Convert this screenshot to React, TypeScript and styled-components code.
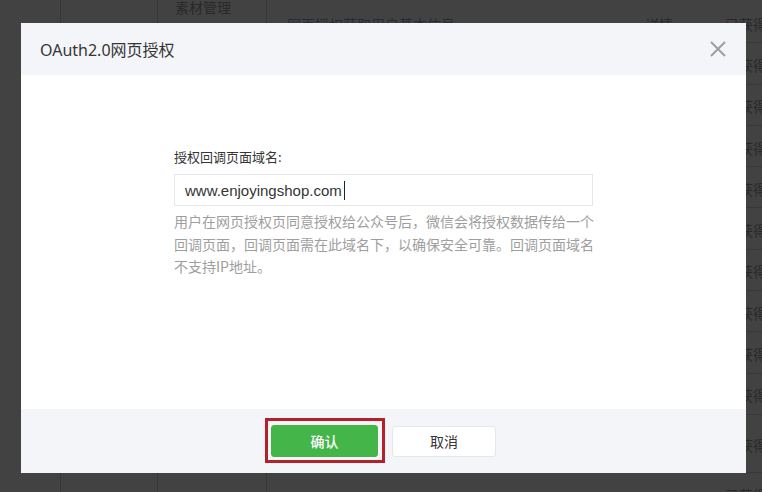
import React from "react";
import styled, { createGlobalStyle } from "styled-components";

const Global = createGlobalStyle`
  html, body { margin: 0; padding: 0; }
  body {
    width: 762px;
    height: 492px;
    overflow: hidden;
    background: #ffffff;
    font-family: "Noto Sans", "Noto Sans CJK SC", sans-serif;
  }
`;

const Page = styled.div`
  position: relative;
  display: flex;
  width: 762px;
  height: 492px;
  background: #ffffff;
  overflow: hidden;
`;

const Rail = styled.div<{ $w: number }>`
  flex: 0 0 ${(p) => p.$w}px;
  border-right: 1px solid #d6d6d6;
  box-sizing: border-box;
`;

const Menu = styled.div`
  flex: 0 0 109px;
  border-right: 1px solid #d6d6d6;
  box-sizing: border-box;
  padding: 0 0 0 17px;
`;

const MenuItem = styled.div`
  margin-top: -2px;
  font-family: "Noto Sans CJK SC", sans-serif;
  font-size: 14px;
  line-height: 18px;
  color: #9c9c9c;
`;

const Main = styled.div`
  flex: 1;
  display: flex;
  flex-direction: column;
  padding-top: 2px;
`;

const Row = styled.div<{ $h: number }>`
  display: flex;
  align-items: center;
  flex: 0 0 ${(p) => p.$h}px;
  border-bottom: 1px solid #d8d8d8;
  box-sizing: border-box;
  padding-top: 3px;
  font-family: "Noto Sans CJK SC", sans-serif;
  font-size: 14px;
  color: #9c9c9c;
`;

const Cell = styled.div<{ $w: number; $c?: string }>`
  flex: 0 0 ${(p) => p.$w}px;
  color: ${(p) => p.$c || "#9c9c9c"};
  white-space: nowrap;
`;

const Dim = styled.div`
  position: absolute;
  inset: 0;
  background: rgba(0, 0, 0, 0.74);
`;

const Modal = styled.div`
  position: absolute;
  left: 21px;
  top: 23px;
  width: 725px;
  height: 450px;
  display: flex;
  flex-direction: column;
  background: #ffffff;
`;

const Header = styled.div`
  flex: 0 0 52px;
  display: flex;
  align-items: center;
  justify-content: space-between;
  padding: 0 20px 0 19px;
  background: #f4f5f9;
`;

const Title = styled.h3`
  margin: 0;
  font-family: "Noto Sans", "Noto Sans CJK SC", sans-serif;
  font-weight: 400;
  font-size: 16px;
  color: #353535;
`;

const Close = styled.button`
  width: 16px;
  height: 16px;
  padding: 0;
  border: 0;
  background: none;
  display: flex;
  cursor: pointer;
`;

const Body = styled.div`
  flex: 1;
  display: flex;
  flex-direction: column;
  align-items: center;
  padding-top: 72px;
`;

const Form = styled.div`
  width: 419px;
  display: flex;
  flex-direction: column;
`;

const Label = styled.label`
  font-family: "Noto Sans CJK SC", sans-serif;
  font-size: 13px;
  line-height: 20px;
  color: #353535;
  margin-bottom: 7px;
`;

const InputBox = styled.div`
  height: 32px;
  box-sizing: border-box;
  border: 1px solid #e4e6eb;
  display: flex;
  align-items: center;
  padding: 0 10px;
  font-family: "Liberation Sans", sans-serif;
  font-size: 15px;
  color: #353535;
`;

const Caret = styled.span`
  display: inline-block;
  width: 1px;
  height: 19px;
  margin-left: 2px;
  background: #222;
`;

const Help = styled.p`
  margin: 4px -3px 0 0;
  font-family: "Noto Sans CJK SC", sans-serif;
  font-size: 14px;
  line-height: 22.5px;
  color: #9e9e9e;
`;

const Footer = styled.div`
  flex: 0 0 64px;
  display: flex;
  align-items: center;
  justify-content: center;
  gap: 14px;
  background: #f4f5f9;
`;

const Button = styled.button<{ $primary?: boolean; $w: number }>`
  position: relative;
  width: ${(p) => p.$w}px;
  height: ${(p) => (p.$primary ? 32 : 31)}px;
  border-radius: 3px;
  border: 1px solid ${(p) => (p.$primary ? "#44b549" : "#e4e8eb")};
  background: ${(p) => (p.$primary ? "#44b549" : "#ffffff")};
  color: ${(p) => (p.$primary ? "#ffffff" : "#353535")};
  font-family: "Noto Sans CJK SC", sans-serif;
  font-size: 14px;
  font-weight: ${(p) => (p.$primary ? 500 : 400)};
  padding: 0;
  cursor: pointer;
`;

const Highlight = styled.span`
  position: absolute;
  left: -7px;
  right: -8px;
  top: -8px;
  bottom: -7px;
  border: 3px solid #b5202a;
  pointer-events: none;
`;

const rows = Array.from({ length: 12 });

export default function App() {
  return (
    <>
      <Global />
      <Page>
        <Rail $w={61} />
        <Rail $w={97} />
        <Menu>
          <MenuItem>素材管理</MenuItem>
        </Menu>
        <Main>
          {rows.map((_, i) => (
            <Row key={i} $h={i === 10 ? 58 : 41.3}>
              <Cell $w={20} />
              <Cell $w={358} $c={i === 0 ? "#8fa6c9" : "#9c9c9c"}>
                {i === 0 ? "网页授权获取用户基本信息" : ""}
              </Cell>
              <Cell $w={80}>{i === 0 ? "详情" : ""}</Cell>
              <Cell $w={60}>已获得</Cell>
            </Row>
          ))}
        </Main>
        <Dim />
        <Modal role="dialog">
          <Header>
            <Title>OAuth2.0网页授权</Title>
            <Close aria-label="关闭">
              <svg width="16" height="16" viewBox="0 0 16 16">
                <path d="M1 1 L15 15 M15 1 L1 15" stroke="#9e9e9e" strokeWidth="2" fill="none" />
              </svg>
            </Close>
          </Header>
          <Body>
            <Form>
              <Label>授权回调页面域名:</Label>
              <InputBox>
                www.enjoyingshop.com
                <Caret />
              </InputBox>
              <Help>
                用户在网页授权页同意授权给公众号后，微信会将授权数据传给一个回调页面，回调页面需在此域名下，以确保安全可靠。回调页面域名不支持IP地址。
              </Help>
            </Form>
          </Body>
          <Footer>
            <Button $primary $w={107}>
              确认
              <Highlight />
            </Button>
            <Button $w={104}>取消</Button>
          </Footer>
        </Modal>
      </Page>
    </>
  );
}
